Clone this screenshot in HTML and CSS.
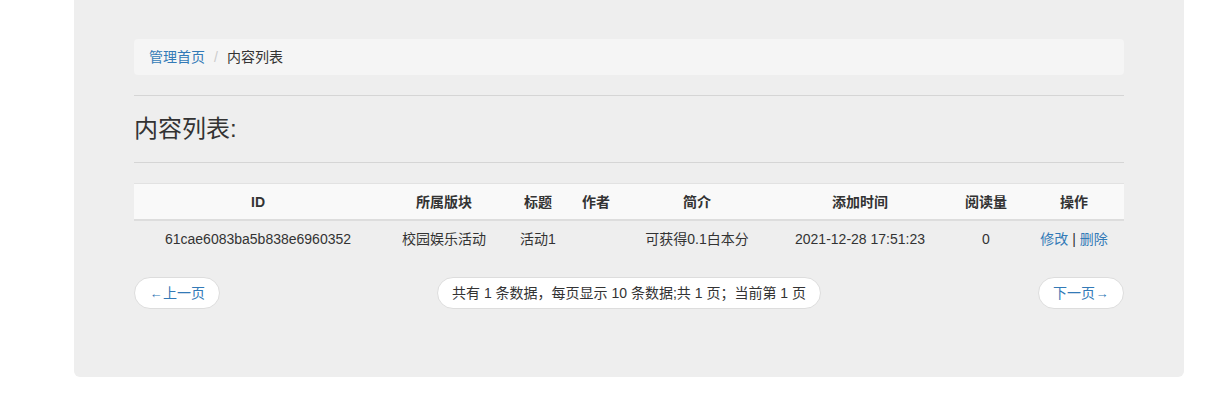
FILE: index.html
```html
<!DOCTYPE html>
<html lang="zh-CN">
<head>
<meta charset="utf-8">
<title>内容列表</title>
<link rel="stylesheet" href="styles.css">
</head>
<body>
<div class="panel">
  <ol class="breadcrumb">
    <li><a href="#">管理首页</a></li>
    <li class="sep">/</li>
    <li class="active">内容列表</li>
  </ol>
  <hr class="rule">
  <h3 class="title">内容列表:</h3>
  <hr class="rule">
  <table class="table">
    <colgroup>
      <col style="width:248px"><col style="width:124px"><col style="width:64px"><col style="width:52px">
      <col style="width:150px"><col style="width:176px"><col style="width:76px"><col style="width:100px">
    </colgroup>
    <thead>
      <tr><th>ID</th><th>所属版块</th><th>标题</th><th>作者</th><th>简介</th><th>添加时间</th><th>阅读量</th><th>操作</th></tr>
    </thead>
    <tbody>
      <tr>
        <td>61cae6083ba5b838e6960352</td>
        <td>校园娱乐活动</td>
        <td>活动1</td>
        <td></td>
        <td>可获得0.1白本分</td>
        <td>2021-12-28 17:51:23</td>
        <td>0</td>
        <td><a href="#">修改</a> | <a href="#">删除</a></td>
      </tr>
    </tbody>
  </table>
  <ul class="pager">
    <li><a href="#" class="pbtn"><span class="arr">←</span>上一页</a></li>
    <li><span class="pbtn info">共有 1 条数据，每页显示 10 条数据;共 1 页；当前第 1 页</span></li>
    <li><a href="#" class="pbtn">下一页<span class="arr">→</span></a></li>
  </ul>
</div>
</body>
</html>
```

FILE: styles.css
```css
* { box-sizing: border-box; }
html, body { margin: 0; padding: 0; background: #fff; }
body {
  font-family: "Liberation Sans", "Noto Sans CJK SC", sans-serif;
  font-size: 14px;
  line-height: 20px;
  color: #333;
}
a { color: #337ab7; text-decoration: none; }

.panel {
  margin: 0 46px 0 74px;
  width: 1110px;
  background: #eee;
  border-radius: 0 0 6px 6px;
  padding: 39px 60px 48px;
}

.breadcrumb {
  list-style: none;
  margin: 0;
  padding: 8px 15px;
  background: #f5f5f5;
  border-radius: 4px;
  display: flex;
  height: 36px;
}
.breadcrumb li { display: block; }
.breadcrumb .sep { color: #ccc; padding: 0 9px 0 9px; }
.breadcrumb .active { color: #333; }

.rule {
  border: 0;
  border-top: 1px solid #d5d5d5;
  margin: 20px 0;
  height: 0;
}
.title {
  font-size: 24px;
  font-weight: normal;
  line-height: 26px;
  margin: 0;
  color: #333;
}

.table {
  width: 990px;
  border-collapse: collapse;
  table-layout: fixed;
  margin-bottom: 20px;
}
.table th, .table td {
  text-align: center;
  padding: 8px 4px;
  line-height: 20px;
  white-space: nowrap;
}
.table thead tr { background: #f9f9f9; border-top: 1px solid #e2e2e2; }
.table th { font-weight: bold; border-bottom: 2px solid #ddd; padding: 8px 4px 7px; }
.table td { border-top: 0; }

.pager {
  list-style: none;
  margin: 0 0 20px;
  padding: 0;
  display: flex;
  justify-content: space-between;
  align-items: center;
}
.pager li { display: block; }
.pbtn {
  display: inline-block;
  padding: 5px 14px 5px 14px;
  background: #fff;
  border: 1px solid #ddd;
  border-radius: 16px;
  line-height: 20px;
  height: 32px;
}
.pbtn.info { color: #333; }
.arr { font-size: 13px; display: inline-block; width: 14px; text-align: center; }
```
